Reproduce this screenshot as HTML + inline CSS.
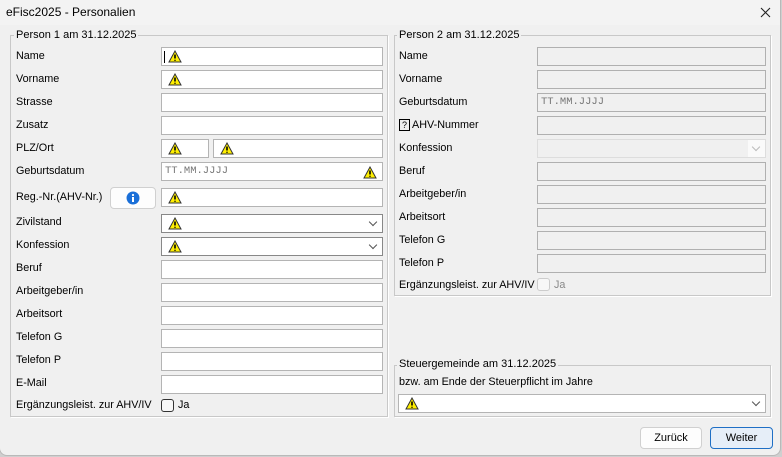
<!DOCTYPE html>
<html><head><meta charset="utf-8"><style>
*{box-sizing:border-box;margin:0;padding:0}
body{width:782px;height:457px;background:#cfcfcf;font-family:"Liberation Sans",sans-serif;font-size:10.8px;color:#000;position:relative;overflow:hidden}
.win{position:absolute;left:0;top:0;width:780px;height:455px;background:#f0f0f0;box-shadow:0 0 0 1px #b9b9b9;border-radius:0 0 7px 7px}
.title{position:absolute;left:0;top:0;width:780px;height:25px;background:#f3f3f3}
.title span{position:absolute;left:6px;top:5px;font-size:12px}
.a{position:absolute}
.grp{position:absolute;border:1px solid #c8c8c8;box-shadow:1px 1px 0 #fff}
.lg{position:absolute;background:#f0f0f0;padding:0 2px;font-size:11px}
.lbl{position:absolute;font-size:10.8px}
.in{position:absolute;height:19px;background:#fff;border:1px solid #b4b4b4}
.dis{position:absolute;height:19px;background:#f0f0f0;border:1px solid #b0b0b0}
.w{position:absolute;top:2px;left:6px;width:14px;height:13px}
.chev{position:absolute;right:6px;top:4px;width:6px;height:6px;border-right:1px solid #555;border-bottom:1px solid #555;transform:rotate(45deg)}
.cb{position:absolute;width:13px;height:13px;border:1px solid #333;border-radius:3px;background:#f7f7f7}
.btn{position:absolute;height:22px;background:#fdfdfd;border:1px solid #d0d0d0;border-radius:4px;text-align:center;line-height:20px;font-size:11px}
.ph{position:absolute;left:3px;top:2px;font-family:"Liberation Mono",monospace;font-size:10.5px;color:#777}
</style></head><body>
<div class="win">
<div class="title"><span>eFisc2025 - Personalien</span>
<svg class="a" style="left:760px;top:7px" width="11" height="11" viewBox="0 0 11 11"><path d="M1 1L10 10M10 1L1 10" stroke="#222" stroke-width="1.1"/></svg></div>

<div class="grp" style="left:10px;top:35px;width:378px;height:382px"></div>
<div class="lg" style="left:14px;top:29px">Person 1 am 31.12.2025</div>

<div class="grp" style="left:394px;top:35px;width:377px;height:261px"></div>
<div class="lg" style="left:397px;top:29px">Person 2 am 31.12.2025</div>

<div class="grp" style="left:394px;top:365px;width:377px;height:52px"></div>
<div class="lg" style="left:397px;top:358px">Steuergemeinde am 31.12.2025</div>
<div class="lbl" style="left:399px;top:376px">bzw. am Ende der Steuerpflicht im Jahre</div>
<div class="in" style="left:398px;top:394px;width:368px"><svg class="w" viewBox="0 0 14 13"><path d="M7 1L13 12H1Z" fill="#ffef00" stroke="#333" stroke-width="1"/><path d="M7 4.5V8.5M7 9.8V10.8" stroke="#000" stroke-width="1.6"/></svg><div class="chev"></div></div>

<div class="lbl" style="left:16px;top:50px">Name</div>
<div class="lbl" style="left:16px;top:73px">Vorname</div>
<div class="lbl" style="left:16px;top:96px">Strasse</div>
<div class="lbl" style="left:16px;top:119px">Zusatz</div>
<div class="lbl" style="left:16px;top:142px">PLZ/Ort</div>
<div class="lbl" style="left:16px;top:165px">Geburtsdatum</div>
<div class="lbl" style="left:16px;top:191px">Reg.-Nr.(AHV-Nr.)</div>
<div class="lbl" style="left:16px;top:216px">Zivilstand</div>
<div class="lbl" style="left:16px;top:239px">Konfession</div>
<div class="lbl" style="left:16px;top:262px">Beruf</div>
<div class="lbl" style="left:16px;top:285px">Arbeitgeber/in</div>
<div class="lbl" style="left:16px;top:308px">Arbeitsort</div>
<div class="lbl" style="left:16px;top:331px">Telefon G</div>
<div class="lbl" style="left:16px;top:354px">Telefon P</div>
<div class="lbl" style="left:16px;top:377px">E-Mail</div>
<div class="lbl" style="left:16px;top:399px">Ergänzungsleist. zur AHV/IV</div>

<div class="in" style="left:161px;top:47px;width:222px"><div class="a" style="left:2px;top:3px;width:1px;height:12px;background:#000"></div><svg class="w" viewBox="0 0 14 13"><path d="M7 1L13 12H1Z" fill="#ffef00" stroke="#333"/><path d="M7 4.5V8.5M7 9.8V10.8" stroke="#000" stroke-width="1.6"/></svg></div>
<div class="in" style="left:161px;top:70px;width:222px"><svg class="w" viewBox="0 0 14 13"><path d="M7 1L13 12H1Z" fill="#ffef00" stroke="#333"/><path d="M7 4.5V8.5M7 9.8V10.8" stroke="#000" stroke-width="1.6"/></svg></div>
<div class="in" style="left:161px;top:93px;width:222px"></div>
<div class="in" style="left:161px;top:116px;width:222px"></div>
<div class="in" style="left:161px;top:139px;width:48px"><svg class="w" viewBox="0 0 14 13"><path d="M7 1L13 12H1Z" fill="#ffef00" stroke="#333"/><path d="M7 4.5V8.5M7 9.8V10.8" stroke="#000" stroke-width="1.6"/></svg></div>
<div class="in" style="left:213px;top:139px;width:170px"><svg class="w" viewBox="0 0 14 13"><path d="M7 1L13 12H1Z" fill="#ffef00" stroke="#333"/><path d="M7 4.5V8.5M7 9.8V10.8" stroke="#000" stroke-width="1.6"/></svg></div>
<div class="in" style="left:161px;top:162px;width:222px"><div class="ph">TT.MM.JJJJ</div><svg class="w" style="left:201px;top:3px" viewBox="0 0 14 13"><path d="M7 1L13 12H1Z" fill="#ffef00" stroke="#333"/><path d="M7 4.5V8.5M7 9.8V10.8" stroke="#000" stroke-width="1.6"/></svg></div>
<div class="btn" style="left:110px;top:187px;width:46px;height:22px"><svg style="position:absolute;left:15px;top:3px" width="14" height="14" viewBox="0 0 14 14"><circle cx="7" cy="7" r="6.5" fill="#1a6fd8"/><rect x="6" y="6" width="2" height="5" fill="#fff"/><circle cx="7" cy="4" r="1.1" fill="#fff"/></svg></div>
<div class="in" style="left:161px;top:188px;width:222px"><svg class="w" viewBox="0 0 14 13"><path d="M7 1L13 12H1Z" fill="#ffef00" stroke="#333"/><path d="M7 4.5V8.5M7 9.8V10.8" stroke="#000" stroke-width="1.6"/></svg></div>
<div class="in" style="left:161px;top:214px;width:222px;border-color:#888"><svg class="w" viewBox="0 0 14 13"><path d="M7 1L13 12H1Z" fill="#ffef00" stroke="#333"/><path d="M7 4.5V8.5M7 9.8V10.8" stroke="#000" stroke-width="1.6"/></svg><div class="chev"></div></div>
<div class="in" style="left:161px;top:237px;width:222px;border-color:#888"><svg class="w" viewBox="0 0 14 13"><path d="M7 1L13 12H1Z" fill="#ffef00" stroke="#333"/><path d="M7 4.5V8.5M7 9.8V10.8" stroke="#000" stroke-width="1.6"/></svg><div class="chev"></div></div>
<div class="in" style="left:161px;top:260px;width:222px"></div>
<div class="in" style="left:161px;top:283px;width:222px"></div>
<div class="in" style="left:161px;top:306px;width:222px"></div>
<div class="in" style="left:161px;top:329px;width:222px"></div>
<div class="in" style="left:161px;top:352px;width:222px"></div>
<div class="in" style="left:161px;top:375px;width:222px"></div>
<div class="cb" style="left:161px;top:399px"></div>
<div class="lbl" style="left:178px;top:399px">Ja</div>

<div class="lbl" style="left:399px;top:50px">Name</div>
<div class="lbl" style="left:399px;top:73px">Vorname</div>
<div class="lbl" style="left:399px;top:96px">Geburtsdatum</div>
<div class="a" style="left:399px;top:119px;width:11px;height:12px;border:1px solid #000;font-size:9px;text-align:center;line-height:10px">?</div>
<div class="lbl" style="left:412px;top:119px">AHV-Nummer</div>
<div class="lbl" style="left:399px;top:142px">Konfession</div>
<div class="lbl" style="left:399px;top:165px">Beruf</div>
<div class="lbl" style="left:399px;top:188px">Arbeitgeber/in</div>
<div class="lbl" style="left:399px;top:211px">Arbeitsort</div>
<div class="lbl" style="left:399px;top:234px">Telefon G</div>
<div class="lbl" style="left:399px;top:257px">Telefon P</div>
<div class="lbl" style="left:399px;top:279px">Ergänzungsleist. zur AHV/IV</div>
<div class="dis" style="left:537px;top:47px;width:229px"></div>
<div class="dis" style="left:537px;top:70px;width:229px"></div>
<div class="dis" style="left:537px;top:93px;width:229px"><div class="ph">TT.MM.JJJJ</div></div>
<div class="dis" style="left:537px;top:116px;width:229px"></div>
<div class="dis" style="left:537px;top:139px;width:229px;border-color:#ddd"><div class="a" style="right:0;top:0;width:17px;height:17px;background:#fafafa"></div><div class="chev" style="border-color:#bbb"></div></div>
<div class="dis" style="left:537px;top:162px;width:229px"></div>
<div class="dis" style="left:537px;top:185px;width:229px"></div>
<div class="dis" style="left:537px;top:208px;width:229px"></div>
<div class="dis" style="left:537px;top:231px;width:229px"></div>
<div class="dis" style="left:537px;top:254px;width:229px"></div>
<div class="cb" style="left:537px;top:278px;border-color:#ccc"></div>
<div class="lbl" style="left:554px;top:279px;color:#888">Ja</div>

<div class="btn" style="left:640px;top:427px;width:62px">Zurück</div>
<div class="btn" style="left:710px;top:427px;width:63px;border-color:#1f6fc5;background:#e6eef8">Weiter</div>
</div>
</body></html>
